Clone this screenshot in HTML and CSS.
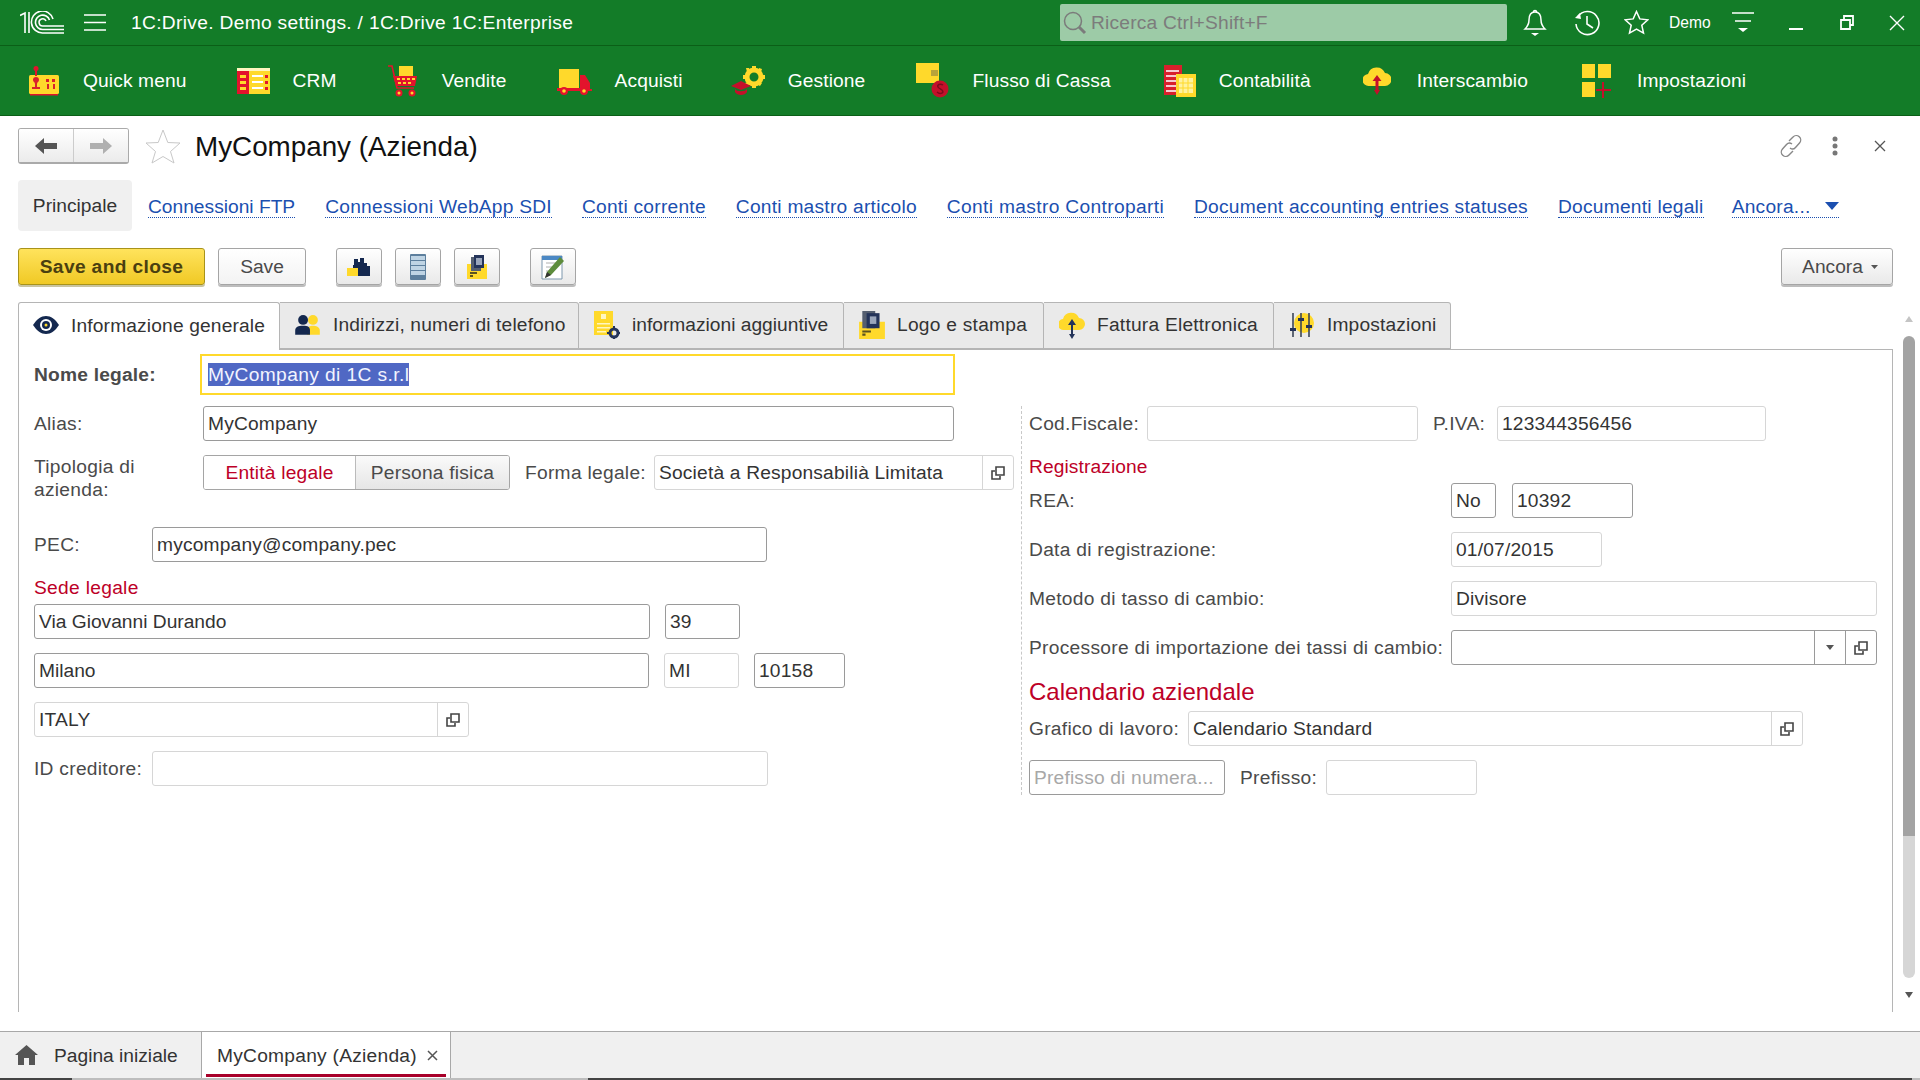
FILE: index.html
```html
<!DOCTYPE html>
<html lang="it">
<head>
<meta charset="utf-8">
<title>MyCompany (Azienda)</title>
<link rel="stylesheet" href="styles.css">
</head>
<body>
<svg class="defs" width="0" height="0" aria-hidden="true">
  <defs>
    <symbol id="open" viewBox="0 0 14 14"><path d="M5 1h8v8H5z" fill="none" stroke="#444" stroke-width="1.6"/><path d="M4 5H1v8h8v-3" fill="none" stroke="#444" stroke-width="1.6"/></symbol>
  </defs>
</svg>
<header class="titlebar">
  <svg class="logo" width="44" height="23" viewBox="0 0 44 23" fill="none" stroke="#fff" stroke-width="1.6"><path d="M0 4.500 5 2v20M9 1v21"/><path d="M33 8A11 11 0 1 0 23 22h21M29.500 9A7.200 7.200 0 1 0 23 18.500h21"/><path d="M26 10A3.600 3.600 0 1 0 23 15h21"/></svg>
  <svg class="burger" width="22" height="17" viewBox="0 0 22 17" stroke="#fff" stroke-width="1.3"><path d="M0 1h22M0 8.500h22M0 16h22"/></svg>
  <div class="apptitle">1C:Drive. Demo settings. / 1C:Drive 1C:Enterprise</div>
  <div class="search">
    <svg width="26" height="26" viewBox="0 0 26 26" fill="none" stroke="#7b7b7b"><circle cx="11" cy="11" r="8.500" stroke-width="1.500"/><path d="m17 17 6 6" stroke-width="3"/></svg>
    <span>Ricerca Ctrl+Shift+F</span>
  </div>
  <div class="sysicons">
    <svg class="sys-bell" width="24" height="28" viewBox="0 0 24 28" fill="none" stroke="#fff" stroke-width="1.500"><path d="M12 3c-5 0-6 4-6 8 0 5-2 7-4 9h20c-2-2-4-4-4-9 0-4-1-8-6-8z"/><path d="M10.500 3a1.500 1.500 0 0 1 3 0"/><path d="M8 24h8l-4 3z" fill="#fff" stroke="none"/></svg>
    <svg class="sys-hist" width="26" height="26" viewBox="0 0 26 26" fill="none" stroke="#fff" stroke-width="1.600"><path d="M4 6.500A11.500 11.500 0 1 1 2 14"/><path d="M1 8l5-5 1 6z" fill="#fff" stroke="none"/><path d="M13 6v8l6 4"/></svg>
    <svg class="sys-star" width="25" height="25" viewBox="0 0 25 25" fill="none" stroke="#fff" stroke-width="1.500"><path d="m12.500 1.500 3.300 7.400 8 .9-6 5.400 1.700 7.900-7-4-7 4 1.700-7.900-6-5.400 8-.9z"/></svg>
    <span class="demo">Demo</span>
    <svg class="sys-filter" width="22" height="21" viewBox="0 0 22 21"><path d="M0 1h22M3 9h16" stroke="#fff" stroke-width="1.300"/><path d="M6 16h10l-5 4z" fill="#fff"/></svg>
    <svg class="sys-min" width="14" height="14" viewBox="0 0 14 14"><path d="M0 13h14" stroke="#fff" stroke-width="2"/></svg>
    <svg class="sys-res" width="14" height="15" viewBox="0 0 14 15" fill="none" stroke="#fff" stroke-width="1.800"><path d="M1 5h9v9H1z"/><path d="M4 5V1h9v9h-3"/></svg>
    <svg class="sys-close" width="16" height="16" viewBox="0 0 16 16" stroke="#fff" stroke-width="1.400"><path d="m1 1 14 14M15 1 1 15"/></svg>
  </div>
</header>

<nav class="menu">
  <a class="mi"><svg width="32" height="30" viewBox="0 0 32 30"><rect x="1" y="9" width="30" height="19" rx="1.500" fill="#ffd92b"/><circle cx="8" cy="2.500" r="2.500" fill="#e3132c"/><path d="M7 4h2v6H7z" fill="#e3132c"/><path d="M5 14a3 3 0 0 1 6 0c0 2-2 2-2 4v3h3v2H4v-2h3v-3c0-2-2-2-2-4z" fill="#d8202c"/><path d="M18 13h3v3h-3zM24 13h3v3h-3zM19 18h2v5h-2zM25 18h2v5h-2z" fill="#d8202c"/><path d="M2 28h28v1.500H2z" fill="#e3132c"/></svg><span>Quick menu</span></a>
  <a class="mi"><svg width="33" height="28" viewBox="0 0 33 28"><path d="M0 1h33v26H0z" fill="#ffd92b"/><path d="M0 1h33v3H0z" fill="#fff6c0"/><path d="M0 4h12v23H0z" fill="#e3132c"/><path d="M3 8h6v3H3zM3 14h6v3H3zM3 20h6v3H3z" fill="#ffd92b"/><path d="M15 8h11v2H15zM15 14h11v2H15zM15 20h11v2H15z" fill="#fff"/><path d="M28 8h3v3h-3zM28 14h3v3h-3zM28 20h3v3h-3z" fill="#e3132c"/></svg><span>CRM</span></a>
  <a class="mi"><svg width="32" height="32" viewBox="0 0 32 32"><path d="M12 1h14v10H12z" fill="#ffd92b"/><path d="M1 1h4l5 22h17" fill="none" stroke="#e3132c" stroke-width="1.600"/><path d="M6 11h24l-2 10H9z" fill="#e3132c"/><path d="M10 13h3v2h-3zM15 13h3v2h-3zM20 13h3v2h-3zM25 13h3v2h-3zM11 17h3v2h-3zM16 17h3v2h-3zM21 17h3v2h-3z" fill="#ffd92b"/><circle cx="12" cy="28" r="3.500" fill="#e3132c"/><circle cx="25" cy="28" r="3.500" fill="#e3132c"/><circle cx="12" cy="28" r="1.500" fill="#ffd92b"/><circle cx="25" cy="28" r="1.500" fill="#ffd92b"/></svg><span>Vendite</span></a>
  <a class="mi"><svg width="35" height="28" viewBox="0 0 35 28"><path d="M2 2h20v19H2z" fill="#ffd92b"/><path d="M23 8h5l5 8v6h2v2H0v-3h23z" fill="#e3132c"/><circle cx="7" cy="24" r="4" fill="#e3132c"/><circle cx="27" cy="24" r="4" fill="#e3132c"/><circle cx="7" cy="24" r="1.800" fill="#ffd92b"/><circle cx="27" cy="24" r="1.800" fill="#ffd92b"/></svg><span>Acquisti</span></a>
  <a class="mi mi-ges"><svg width="34" height="30" viewBox="0 0 34 30"><circle cx="23" cy="11" r="7" fill="none" stroke="#ffd92b" stroke-width="5"/><path d="M21 0h4v4h-4zM21 18h4v4h-4zM12 9h4v4h-4zM30 9h4v4h-4zM15 2l3 0 1 3-3 1zM28 2l3 1-1 3-3-1zM15 20l-1-3 3-1 1 3zM29 20l2-3-3-1-1 3z" fill="#ffd92b"/><path d="M0 20l10-5 10 5-10 4z" fill="#c4102a"/><path d="M4 23c2 3 10 3 12 0v3c-2 4-10 4-12 0z" fill="#c4102a"/></svg><span>Gestione</span></a>
  <a class="mi mi-flu"><svg width="33" height="36" viewBox="0 0 33 36"><path d="M0 0h23v20H0z" fill="#ffd92b"/><path d="M15 7h7v6h-7z" fill="#b8a43a"/><circle cx="24" cy="26" r="8.500" fill="#c4102a"/><path d="M27 22c-3-2-6 0-5 2s5 2 5 5c-1 2-4 2-6 0" fill="none" stroke="#7d0a1d" stroke-width="1.500"/></svg><span>Flusso di Cassa</span></a>
  <a class="mi mi-con"><svg width="32" height="32" viewBox="0 0 32 32"><path d="M0 0h18v30H0z" fill="#d8202c"/><path d="M2 5h13v2H2zM2 10h13v2H2zM2 15h13v2H2zM2 20h13v2H2zM2 25h13v2H2z" fill="#f6c9cf"/><path d="M12 9h20v23H12z" fill="#ffd92b"/><path d="M15 13h14v15H15z" fill="#fff2a0"/><path d="M19 13v15M24 13v15M15 18h14M15 23h14" stroke="#ffd92b"/></svg><span>Contabilità</span></a>
  <a class="mi mi-narrow mi-int"><svg width="28" height="30" viewBox="0 0 28 30"><path d="M6 20a6 6 0 0 1-1-12 9 9 0 0 1 17-1 6.500 6.500 0 0 1 0 13z" fill="#ffd92b"/><path d="M15.500 15h-3v9h-1.500l3 5 3-5h-1.500zM14 9l-4.500 6h9z" fill="#c4102a"/></svg><span>Interscambio</span></a>
  <a class="mi mi-narrow mi-imp"><svg width="29" height="34" viewBox="0 0 29 34"><path d="M0 0h13v14H0zM16 0h13v14H16zM0 18h13v15H0z" fill="#ffd92b"/><path d="M20 18h2v16h-2zM14 25h15v2H14z" fill="#c4102a"/></svg><span>Impostazioni</span></a>
</nav>

<main class="page">
  <div class="head">
    <div class="hist">
      <button class="hist-btn"><svg width="22" height="16" viewBox="0 0 22 16"><path d="M0 8l9-8v5h13v6H9v5z" fill="#555"/></svg></button>
      <button class="hist-btn"><svg width="22" height="16" viewBox="0 0 22 16"><path d="M22 8l-9-8v5H0v6h13v5z" fill="#b0b0b0"/></svg></button>
    </div>
    <svg class="fav" width="36" height="35" viewBox="0 0 36 35" fill="#fff" stroke="#c8c8c8"><path d="m18 1 4.800 12.500L35 14l-9.500 8.500L29 34l-11-6.500L7 34l3.500-11.500L1 14l12.200-.5z"/></svg>
    <h1 class="title">MyCompany (Azienda)</h1>
    <div class="head-tools">
      <svg width="24" height="24" viewBox="0 0 24 24" fill="none" stroke="#888" stroke-width="1.400"><path d="M10 7l4-4a4.200 4.200 0 0 1 6.500 6l-4 4.500a4 4 0 0 1-5.500.5"/><path d="M14 17l-4 4a4.200 4.200 0 0 1-6.500-6l4-4.500a4 4 0 0 1 5.500-.5"/></svg>
      <svg class="tool-dots" width="6" height="20" viewBox="0 0 6 20" fill="#777"><circle cx="3" cy="3" r="2.500"/><circle cx="3" cy="10" r="2.500"/><circle cx="3" cy="17" r="2.500"/></svg>
      <svg class="tool-x" width="12" height="12" viewBox="0 0 12 12" stroke="#555" stroke-width="1.300"><path d="m1 1 10 10M11 1 1 11"/></svg>
    </div>
  </div>

  <div class="links">
    <span class="link-on">Principale</span>
    <a class="link link-ftp">Connessioni FTP</a>
    <a class="link">Connessioni WebApp SDI</a>
    <a class="link">Conti corrente</a>
    <a class="link">Conti mastro articolo</a>
    <a class="link link-wide">Conti mastro Controparti</a>
    <a class="link">Document accounting entries statuses</a>
    <a class="link">Documenti legali</a>
    <a class="link link-more">Ancora...<svg width="14" height="8" viewBox="0 0 14 8"><path d="M0 0h14L7 8z" fill="#1b4fb0"/></svg></a>
  </div>

  <div class="actions">
    <button class="btn btn-main">Save and close</button>
    <button class="btn btn-save">Save</button>
    <button class="btn btn-ico btn-first"><svg width="24" height="18" viewBox="0 0 24 18"><path d="M0 10h6V8h8v10H0z" fill="#ffd92b"/><path d="M6 7h1V1h4v3h2V0h4v5h3v3h3v10H11V10H6z" fill="#14284f"/></svg></button>
    <button class="btn btn-ico"><svg width="16" height="26" viewBox="0 0 16 26"><rect width="16" height="26" rx="1" fill="#5d7f9d"/><path d="M1 2h14v4H1zM1 7h14v4H1zM1 12h14v4H1zM1 17h14v4H1z" fill="#bfd4e4"/></svg></button>
    <button class="btn btn-ico"><svg width="20" height="24" viewBox="0 0 20 24"><path d="M0 9h20v15H0z" fill="#ffd92b"/><path d="M4 2h10v14H4z" fill="#555f70"/><path d="M7 0h10v13H7z" fill="#24345a"/><path d="M9 3h6v7H9z" fill="#9aa6bb"/><path d="M3 17h7v2H3zM3 20h3v2H3z" fill="#5c5320"/></svg></button>
    <button class="btn btn-ico btn-gap"><svg width="24" height="26" viewBox="0 0 24 26"><path d="M1 2h20v23H1z" fill="#fff" stroke="#7d97ad"/><path d="M1 2h20v4H1z" fill="#4b88c4"/><path d="M5 9h12M5 13h9M5 17h6" stroke="#b0b0b0"/><path d="M19 3l4 4-13 14-6 3 2-6z" fill="#5d8c3c"/><path d="M6 18l4 3-6 3z" fill="#333"/></svg></button>
    <button class="btn btn-more">Ancora<svg width="7" height="4" viewBox="0 0 7 4"><path d="M0 0h7L3.500 4z" fill="#555"/></svg></button>
  </div>

  <div class="workspace">
    <div class="pane">
      <div class="tabs">
        <div class="tab tab-on t1"><svg width="26" height="18" viewBox="0 0 26 18"><path d="M0 9C4 3 8 0 13 0s9 3 13 9c-4 6-8 9-13 9S4 15 0 9z" fill="#14284f"/><circle cx="13" cy="9" r="6" fill="#fff"/><circle cx="13" cy="9" r="4" fill="#14284f"/><circle cx="13" cy="9" r="1.500" fill="#ffd92b"/></svg><span>Informazione generale</span></div>
        <div class="tab t2"><svg width="24" height="20" viewBox="0 0 26 22"><circle cx="18" cy="6" r="5" fill="#ffd92b"/><path d="M12 21v-4c0-4 3-5 6-5s7 1 7 5v4z" fill="#ffd92b"/><circle cx="8" cy="6" r="5" fill="#14284f"/><path d="M0 21v-4c0-4 3-5 8-5s7 1 7 5v4z" fill="#14284f"/></svg><span>Indirizzi, numeri di telefono</span></div>
        <div class="tab t3"><svg width="26" height="28" viewBox="0 0 26 28"><path d="M0 0h19v24H0z" fill="#ffd92b"/><path d="M3 12h13v1.500H3zM3 16h13v1.500H3zM3 20h9v1.500H3z" fill="#fff6c0"/><path d="M7 3h5v5H7z" fill="#fff6c0"/><circle cx="20" cy="22" r="4" fill="none" stroke="#24345a" stroke-width="3"/><path d="M19 15h2v3h-2zM19 26h2v2h-2zM13 21h3v2h-3zM24 21h2v2h-2z" fill="#24345a"/></svg><span>informazioni aggiuntive</span></div>
        <div class="tab t4"><svg width="24" height="26" viewBox="0 0 24 26"><path d="M0 10h24v16H0z" fill="#ffd92b"/><path d="M3 0h12v16H3z" fill="#555f70"/><path d="M7 2h12v14H7z" fill="#24345a"/><path d="M10 5h6v7h-6z" fill="#9aa6bb"/><path d="M3 18h8v2H3zM3 21h3v2H3z" fill="#5c5320"/></svg><span>Logo e stampa</span></div>
        <div class="tab t5"><svg width="26" height="28" viewBox="0 0 26 28"><path d="M5 19a5.500 5.500 0 0 1-1-11 8.500 8.500 0 0 1 16-1 6 6 0 0 1 0 12z" fill="#ffd92b"/><path d="M14 14h-2v9h-2l3 5 3-5h-2zM13 8l-4 6h8z" fill="#24345a"/></svg><span>Fattura Elettronica</span></div>
        <div class="tab t6"><svg width="26" height="26" viewBox="0 0 26 26"><circle cx="15" cy="11" r="10" fill="#ffd92b"/><path d="M4 1v24M12 1v24M20 1v24" stroke="#3c4658" stroke-width="1.600"/><path d="M1 16h6v3H1zM9 6h6v3H9zM17 13h6v3h-6z" fill="#24345a"/></svg><span>Impostazioni</span></div>
      </div>
      <section class="panel">
        <div class="col-l">
          <div class="row row-first">
            <label class="lab lab-b">Nome legale:</label>
            <div class="fld fld-focus w-focus"><span class="sel">MyCompany di 1C s.r.l</span></div>
          </div>
          <div class="row gap-s">
            <label class="lab lab-169">Alias:</label>
            <div class="fld dark w-751">MyCompany</div>
          </div>
          <div class="row gap">
            <label class="lab lab-169 lab-2l">Tipologia di azienda:</label>
            <div class="toggle">
              <span class="tg tg-on">Entità legale</span>
              <span class="tg">Persona fisica</span>
            </div>
            <label class="lab lab-forma">Forma legale:</label>
            <div class="fld w-360 has-open">
              <span class="fld-txt">Società a Responsabilià Limitata</span>
              <span class="fld-btn"><svg width="14" height="14"><use href="#open"/></svg></span>
            </div>
          </div>
          <div class="row gap-l">
            <label class="lab lab-118">PEC:</label>
            <div class="fld dark w-615">mycompany@company.pec</div>
          </div>
          <div class="sect sect-l">Sede legale</div>
          <div class="row">
            <div class="fld dark w-616 tight">Via Giovanni Durando</div>
            <div class="fld dark w-75 ml-15">39</div>
          </div>
          <div class="row gap">
            <div class="fld dark w-615 tight">Milano</div>
            <div class="fld w-75 ml-15">MI</div>
            <div class="fld dark w-91 ml-15">10158</div>
          </div>
          <div class="row gap">
            <div class="fld w-435 has-open">
              <span class="fld-txt">ITALY</span>
              <span class="fld-btn"><svg width="14" height="14"><use href="#open"/></svg></span>
            </div>
          </div>
          <div class="row gap">
            <label class="lab lab-118">ID creditore:</label>
            <div class="fld w-616"></div>
          </div>
        </div>

        <div class="col-r">
          <div class="row">
            <label class="lab lab-118">Cod.Fiscale:</label>
            <div class="fld w-271"></div>
            <label class="lab lab-iva">P.IVA:</label>
            <div class="fld w-269">123344356456</div>
          </div>
          <div class="sect sect-r">Registrazione</div>
          <div class="row">
            <label class="lab lab-422">REA:</label>
            <div class="fld dark w-45">No</div>
            <div class="fld dark w-121 ml-16">10392</div>
          </div>
          <div class="row gap">
            <label class="lab lab-422">Data di registrazione:</label>
            <div class="fld w-151">01/07/2015</div>
          </div>
          <div class="row gap">
            <label class="lab lab-422">Metodo di tasso di cambio:</label>
            <div class="fld w-426">Divisore</div>
          </div>
          <div class="row gap">
            <label class="lab lab-422">Processore di importazione dei tassi di cambio:</label>
            <div class="fld dark w-426 has-open">
              <span class="fld-txt"></span>
              <span class="fld-btn dark-sep"><svg width="8" height="5" viewBox="0 0 8 5"><path d="M0 0h8L4 5z" fill="#555"/></svg></span>
              <span class="fld-btn dark-sep"><svg width="14" height="14"><use href="#open"/></svg></span>
            </div>
          </div>
          <div class="sect-big">Calendario aziendale</div>
          <div class="row">
            <label class="lab lab-159">Grafico di lavoro:</label>
            <div class="fld w-615 has-open">
              <span class="fld-txt">Calendario Standard</span>
              <span class="fld-btn"><svg width="14" height="14"><use href="#open"/></svg></span>
            </div>
          </div>
          <div class="row gap">
            <div class="fld dark w-196 ph">Prefisso di numera...</div>
            <label class="lab lab-pref">Prefisso:</label>
            <div class="fld w-151"></div>
          </div>
        </div>
      </section>
    </div>
    <div class="scroll">
      <svg class="arr-up" width="8" height="6" viewBox="0 0 8 6"><path d="M0 6h8L4 0z" fill="#c4c4c4"/></svg>
      <div class="thumb"></div>
      <div class="track"></div>
      <svg class="arr-dn" width="8" height="6" viewBox="0 0 8 6"><path d="M0 0h8L4 6z" fill="#555"/></svg>
    </div>
  </div>
</main>

<footer class="foot">
  <div class="openbar">
    <div class="ot ot-home"><svg width="23" height="20" viewBox="0 0 23 20"><path d="M11.500 0 23 10h-3v10h-6v-7H9v7H3V10H0z" fill="#555"/></svg><span>Pagina iniziale</span></div>
    <div class="ot ot-on"><span>MyCompany (Azienda)</span><svg width="11" height="11" viewBox="0 0 11 11" stroke="#555" stroke-width="1.500"><path d="m1 1 9 9M10 1l-9 9"/></svg></div>
  </div>
  <div class="strip"><i class="s1"></i><i class="s2"></i><i class="s3"></i><i class="s4"></i></div>
</footer>
</body>
</html>
```
FILE: styles.css
```css
* { box-sizing: border-box; }
html, body { margin: 0; padding: 0; }
body {
  width: 1920px; height: 1080px; overflow: hidden;
  display: flex; flex-direction: column;
  font: 19.2px/23px "Liberation Sans", Arial, sans-serif;
  color: #4a4a4a; background: #fff;
}
.defs { position: absolute; }
svg { display: block; flex: none; }
button { font: inherit; color: inherit; margin: 0; }

/* title bar */
.titlebar {
  height: 46px; flex: none; display: flex; align-items: center;
  background: #137c28; border-bottom: 1px solid #0b5f17; color: #fff;
  padding-left: 20px;
}
.burger { margin-left: 20px; }
.apptitle { margin-left: 25px; width: 929px; white-space: nowrap; letter-spacing: .32px; }
.search {
  width: 447px; height: 37px; border-radius: 2px;
  background: #9dcba7; color: #7c7c7c; display: flex; align-items: center;
  padding-left: 2px; gap: 3px; letter-spacing: .2px;
}
.sysicons { display: flex; align-items: center; color: #fff; margin-left: 16px; }
.sys-hist { margin-left: 27px; }
.sys-star { margin-left: 24px; }
.demo { margin-left: 20px; font-size: 15.600px; width: 41px; white-space: nowrap; }
.sys-filter { margin-left: 22px; }
.sys-min { margin-left: 35px; }
.sys-res { margin-left: 37px; }
.sys-close { margin-left: 35px; }

/* main menu */
.menu {
  height: 70px; flex: none; display: flex; align-items: center;
  background: #137c28; border-bottom: 1px solid #0b5f17; color: #fff;
  padding-left: 28px; gap: 50px; letter-spacing: .12px;
}
.mi { display: flex; align-items: center; gap: 23px; white-space: nowrap; }
.mi-narrow { gap: 26px; }
.mi-ges { margin-left: -2px; }
.mi-flu { margin-left: 1px; }
.mi-con { margin-left: 3px; }
.mi-int { margin-left: 2px; }
.mi-imp { margin-left: 4px; }

/* page */
.page { flex: 1; min-height: 0; padding: 12px 0 19px 18px; display: flex; flex-direction: column; }
.head { height: 36px; flex: none; display: flex; align-items: center; }
.hist { display: flex; width: 111px; height: 36px; border: 1px solid #aaa; border-bottom-width: 2px; border-radius: 3px; overflow: hidden; }
.hist-btn {
  flex: 1; border: 0; padding: 0; display: flex; align-items: center; justify-content: center;
  background: linear-gradient(#fff, #ebebeb);
}
.hist-btn + .hist-btn { border-left: 1px solid #ccc; }
.fav { margin-left: 16px; }
.title { margin: 2px 0 0 14px; font-size: 27.800px; line-height: 34px; font-weight: 400; color: #111; white-space: nowrap; }
.head-tools { margin-left: auto; display: flex; align-items: center; padding-right: 34px; }
.tool-dots { margin-left: 29px; }
.tool-x { margin-left: 36px; }

.links { height: 51px; margin-top: 16px; flex: none; display: flex; align-items: center; gap: 30px; letter-spacing: .24px; }
.link-on {
  width: 114px; height: 51px; margin-right: -14px; background: #f0f0f0; border-radius: 4px;
  display: flex; align-items: center; justify-content: center; color: #333; letter-spacing: 0;
}
.link { color: #1b4fb0; border-bottom: 1px dotted #1b4fb0; line-height: 21px; white-space: nowrap; margin-top: 2px; }
.link-ftp { letter-spacing: 0; }
.link-wide { letter-spacing: .34px; }
.link-more { display: flex; align-items: center; gap: 14px; margin-left: -2px; }

.actions { height: 39px; margin-top: 17px; flex: none; display: flex; align-items: flex-start; padding-right: 27px; }
.btn {
  height: 37px; border: 1px solid #a5a5a5; border-radius: 3px; box-shadow: 0 2px 0 #bdbdbd;
  background: linear-gradient(#fff, #e9e9e9); padding: 0; color: #4a4a4a;
  display: flex; align-items: center; justify-content: center;
}
.btn-main {
  width: 187px; font-weight: 700; color: #4a3f10; border-color: #a8931a; letter-spacing: .35px;
  background: linear-gradient(#ffe35c, #f0c925); box-shadow: 0 2px 0 #c9c4a0;
}
.btn-save { width: 88px; margin-left: 13px; background: linear-gradient(#fff, #f3f3f3); }
.btn-ico { width: 46px; margin-left: 13px; }
.btn-first { margin-left: 30px; }
.btn-gap { margin-left: 30px; }
.btn-more { width: 112px; margin-left: auto; gap: 8px; padding-left: 6px; }

.workspace { flex: 1; min-height: 0; margin-top: 15px; display: flex; }
.pane { width: 1875px; flex: none; display: flex; flex-direction: column; }
.tabs { height: 48px; flex: none; display: flex; position: relative; z-index: 1; }
.tab {
  height: 47px; flex: none; display: flex; align-items: center; gap: 12px; padding: 0 0 2px 15px;
  background: #eaeaea; border: 1px solid #b5b5b5; border-left-width: 0; border-radius: 0 3px 0 0;
  white-space: nowrap; color: #333; letter-spacing: .15px;
}
.tab svg { width: 26px; height: auto; max-height: 28px; }
.tab-on { background: #fff; border-left-width: 1px; height: 48px; border-bottom: 0; border-radius: 3px 3px 0 0; padding-left: 14px; padding-bottom: 3px; }
.t1 { width: 262px; }
.t2 { width: 299px; }
.t3 { width: 265px; letter-spacing: 0; }
.t4 { width: 200px; letter-spacing: .25px; }
.t5 { width: 230px; letter-spacing: .22px; }
.t6 { width: 177px; }
.panel {
  flex: 1; min-height: 0; margin-top: -1px; display: flex;
  border: 1px solid #b5b5b5; border-bottom: 0; padding-left: 15px;
}

.scroll { width: 12px; margin-left: 10px; flex: none; display: flex; flex-direction: column; align-items: center; }
.arr-up { margin-top: 14px; }
.thumb { width: 12px; height: 500px; margin-top: 14px; background: #a3a3a3; border-radius: 6px 6px 0 0; }
.track { width: 12px; height: 142px; background: #d6d6d6; border-radius: 0 0 6px 6px; }
.arr-dn { margin-top: 14px; }

/* form */
.col-l { width: 987px; flex: none; padding-top: 4px; }
.col-r {
  width: 864px; margin-top: 56px; height: 389px; flex: none;
  border-left: 1px dashed #c8c8c8; padding-left: 7px;
}
.row { height: 35px; display: flex; align-items: center; white-space: nowrap; }
.row-first { height: 41px; }
.gap { margin-top: 14px; }
.gap-s { margin-top: 11px; }
.gap-l { margin-top: 37px; }
.lab { flex: none; letter-spacing: .28px; }
.lab-b { width: 166px; font-weight: 700; letter-spacing: .2px; }
.lab-169 { width: 169px; }
.lab-118 { width: 118px; }
.lab-2l { white-space: normal; height: 46px; align-self: flex-start; }
.lab-forma { width: 129px; margin-left: 15px; }
.lab-iva { width: 64px; margin-left: 15px; }
.lab-422 { width: 422px; }
.lab-159 { width: 159px; }
.lab-pref { width: 86px; margin-left: 15px; }

.fld {
  height: 35px; flex: none; display: flex; align-items: center; padding-left: 4px;
  border: 1px solid #d6d6d6; border-radius: 3px; background: #fff; color: #333; overflow: hidden;
  letter-spacing: .18px;
}
.tight { letter-spacing: 0; }
.dark { border-color: #9a9a9a; }
.fld-focus { height: 41px; padding-left: 6px; border: 2px solid #ffd92b; border-radius: 0; }
.sel { background: #5068c4; color: #f2f4ff; line-height: 23px; letter-spacing: .4px; }
.has-open { padding-right: 0; }
.fld-txt { flex: 1; white-space: nowrap; }
.fld-btn { width: 31px; height: 33px; flex: none; display: flex; align-items: center; justify-content: center; border-left: 1px solid #d6d6d6; }
.dark-sep { border-left-color: #9a9a9a; }
.ph { color: #a8a8a8; }
.w-focus { width: 755px; }
.w-751 { width: 751px; }
.w-615 { width: 615px; }
.w-616 { width: 616px; }
.w-360 { width: 360px; }
.w-435 { width: 435px; }
.w-75 { width: 75px; }
.w-91 { width: 91px; }
.w-271 { width: 271px; }
.w-269 { width: 269px; }
.w-45 { width: 45px; }
.w-121 { width: 121px; }
.w-151 { width: 151px; }
.w-426 { width: 426px; }
.w-196 { width: 196px; }
.ml-16 { margin-left: 16px; }
.ml-15 { margin-left: 15px; }

.toggle { width: 307px; height: 35px; flex: none; display: flex; border: 1px solid #a5a5a5; border-radius: 3px; overflow: hidden; letter-spacing: .2px; }
.tg { flex: 1; display: flex; align-items: center; justify-content: center; background: linear-gradient(#fafafa, #e6e6e6); border-left: 1px solid #bbb; }
.tg-on { width: 151px; flex: none; background: #fff; color: #bd0027; border-left: 0; }
.sect { color: #bd0027; height: 23px; }
.sect-l { margin-top: 14px; margin-bottom: 5px; letter-spacing: .3px; }
.sect-r { margin-top: 14px; margin-bottom: 5px; letter-spacing: .1px; }
.sect-big { color: #bd0027; font-size: 24px; line-height: 28px; margin: 13px 0 5px; }

/* bottom */
.foot { height: 49px; flex: none; border-top: 1px solid #a8a8a8; background: #f0f0f0; display: flex; flex-direction: column; }
.openbar { height: 46px; display: flex; }
.ot { height: 46px; display: flex; align-items: center; white-space: nowrap; color: #333; }
.ot-home { width: 202px; padding-left: 15px; gap: 16px; border-right: 1px solid #a8a8a8; }
.ot-on { width: 249px; padding-left: 15px; gap: 10px; background: #fff; border-right: 1px solid #a8a8a8; position: relative; letter-spacing: .25px; }
.ot-on::after { content: ""; position: absolute; left: 4px; right: 4px; bottom: 1px; height: 3px; background: #a8002a; }
.strip { height: 2px; display: flex; }
.strip i { display: block; height: 2px; }
.s1 { width: 72px; background: #444; }
.s2 { width: 516px; background: #bdbdbd; }
.s3 { width: 1324px; background: #444; }
.s4 { flex: 1; background: #bdbdbd; }
```
